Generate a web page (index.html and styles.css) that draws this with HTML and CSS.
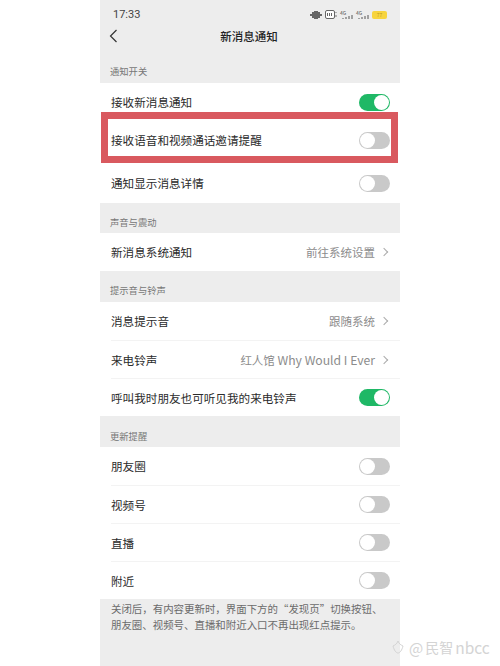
FILE: index.html
```html
<!DOCTYPE html>
<html lang="zh-CN">
<head>
<meta charset="utf-8">
<title>新消息通知</title>
<link rel="stylesheet" href="styles.css">
</head>
<body>
<main class="phone">
  <div class="status">
    <span class="time">17:33</span>
    <div class="status-icons">
      <svg class="ic" width="12" height="10" viewBox="0 0 12 10"><path d="M4 1h4v1h2v2h2v2h-2v2H8v1H4V8H2V6H0V4h2V2h2z" fill="#666"/></svg>
      <svg class="ic" width="12" height="9" viewBox="0 0 12 9"><rect x=".5" y=".5" width="9" height="8" rx="1.5" fill="#fff" stroke="#666"/><path d="M2.5 3v3M4.5 3v3M6.5 3v3" stroke="#666"/><path d="M11 2v1M11 5v2" stroke="#777"/></svg>
      <span class="net"><span class="net-t">4G</span><svg width="11" height="4" viewBox="0 0 11 4"><path d="M1 3v1M4 2v2M7 1v3M10 0v4" stroke="#555"/></svg></span>
      <span class="net"><span class="net-t">4G</span><svg width="11" height="4" viewBox="0 0 11 4"><path d="M1 3v1M4 2v2M7 1v3M10 0v4" stroke="#555"/></svg></span>
      <span class="batt"><span class="batt-num">77</span></span>
    </div>
  </div>
  <header class="nav">
    <svg class="back" width="9" height="14" viewBox="0 0 9 14"><path d="M7.5 1 1.5 7l6 6" fill="none" stroke="#333" stroke-width="1.2"/></svg>
    <h1 class="title">新消息通知</h1>
  </header>

  <div class="label label-first">通知开关</div>
  <section class="group">
    <div class="row"><span>接收新消息通知</span><span class="sw on"></span></div>
    <div class="row row-tall row-mark"><span>接收语音和视频通话邀请提醒</span><span class="sw"></span><span class="mark"></span></div>
    <div class="row row-last"><span>通知显示消息详情</span><span class="sw"></span></div>
  </section>

  <div class="label">声音与震动</div>
  <section class="group">
    <div class="row"><span>新消息系统通知</span><span class="val">前往系统设置<i class="chev"></i></span></div>
  </section>

  <div class="label label-wide">提示音与铃声</div>
  <section class="group">
    <div class="row"><span>消息提示音</span><span class="val">跟随系统<i class="chev"></i></span></div>
    <div class="row"><span>来电铃声</span><span class="val"><span>红人馆&nbsp;<span class="latin">Why Would I Ever</span></span><i class="chev"></i></span></div>
    <div class="row"><span>呼叫我时朋友也可听见我的来电铃声</span><span class="sw on"></span></div>
  </section>

  <div class="label label-low">更新提醒</div>
  <section class="group">
    <div class="row"><span>朋友圈</span><span class="sw"></span></div>
    <div class="row"><span>视频号</span><span class="sw"></span></div>
    <div class="row"><span>直播</span><span class="sw"></span></div>
    <div class="row"><span>附近</span><span class="sw"></span></div>
  </section>

  <p class="foot">关闭后，有内容更新时，界面下方的“发现页”切换按钮、朋友圈、视频号、直播和附近入口不再出现红点提示。</p>
</main>
<div class="mark-wm"><svg width="12" height="14" viewBox="0 0 12 14"><path d="M6 1C5 4 3 5 1 6c1 4 3 7 5 7s4-3 5-7C9 5 7 4 6 1z" fill="none" stroke="#d4d4d4"/></svg><span class="wm-at">@</span><span class="wm-name">民智</span><span>nbcc</span></div>
</body>
</html>
```
FILE: styles.css
```css
* { box-sizing: border-box; }
html, body { margin: 0; padding: 0; background: #fff; }
body {
  width: 500px;
  height: 666px;
  overflow: hidden;
  position: relative;
  font-family: "Noto Sans CJK SC", "Liberation Sans", sans-serif;
  color: #2b2b2b;
}
.phone {
  width: 300px;
  height: 666px;
  margin-left: 100px;
  background: #ededed;
  display: flex;
  flex-direction: column;
}
.status {
  height: 24px;
  padding: 5px 13px 0 13px;
  display: flex;
  justify-content: space-between;
  align-items: center;
}
.time { font-size: 11px; color: #444; font-family: "Roboto", sans-serif; }
.status-icons { display: flex; align-items: center; gap: 3px; }
.ic { display: block; }
.net { display: flex; flex-direction: column; align-items: flex-end; width: 13px; }
.net-t { font-size: 5px; line-height: 5px; color: #555; align-self: flex-start; }
.net svg { display: block; }
.batt {
  width: 15px;
  height: 8px;
  background: #f7d43f;
  border-radius: 2px;
  display: flex;
  align-items: center;
  justify-content: center;
}
.batt-num { font-size: 5px; line-height: 8px; color: #b89a20; }
.nav {
  height: 24px;
  position: relative;
  display: flex;
  align-items: center;
  justify-content: center;
  padding-right: 2px;
}
.back { position: absolute; left: 9px; top: 5px; }
.title { margin: 0; font-size: 11.5px; font-weight: 500; color: #222; }
.label {
  height: 30px;
  padding: 13px 10px 0;
  font-size: 9.3px;
  line-height: 12px;
  color: #777;
}
.label-first { height: 35px; padding-top: 17px; }
.label-wide { height: 31px; }
.label-low { height: 31px; padding-top: 14px; }
.group { background: #fff; }
.row {
  height: 38px;
  margin-left: 11px;
  padding-right: 10px;
  display: flex;
  align-items: center;
  justify-content: space-between;
  font-size: 11.6px;
  color: #2b2b2b;
  border-top: 1px solid #f3f3f3;
}
.row:first-child { border-top: 0; }
.row-tall { height: 42px; border-top: 0; padding-bottom: 4px; }
.row-last { height: 40px; border-top: 0; }
.row-mark { position: relative; }
.mark {
  position: absolute;
  left: -10px;
  top: -9px;
  width: 297px;
  height: 51px;
  border: 7px solid #d9595f;
  pointer-events: none;
}
.sw {
  width: 31px;
  height: 17px;
  border-radius: 9px;
  background: #c9c9c9;
  position: relative;
  flex: none;
}
.sw::after {
  content: "";
  position: absolute;
  left: 1px;
  top: 1px;
  width: 15px;
  height: 15px;
  border-radius: 50%;
  background: #fff;
}
.sw.on { background: #1fb866; }
.sw.on::after { left: 15px; }
.val {
  display: flex;
  align-items: center;
  color: #8c8c8c;
  font-size: 11.5px;
}
.latin { font-size: 12.2px; }
.chev {
  width: 6px;
  height: 6px;
  margin: 0 3px 0 6px;
  border-top: 1px solid #aaa;
  border-right: 1px solid #aaa;
  transform: rotate(45deg);
}
.foot {
  margin: 0;
  padding: 2px 11px 0;
  font-size: 10.45px;
  line-height: 16px;
  color: #6b6b6b;
}
.mark-wm {
  position: absolute;
  left: 392px;
  top: 636px;
  display: flex;
  align-items: center;
  gap: 2px;
  font-size: 15.5px;
  color: #d4d4d4;
}
.wm-at { margin-left: 3px; font-size: 15px; }
.wm-name { font-size: 14px; }
```
